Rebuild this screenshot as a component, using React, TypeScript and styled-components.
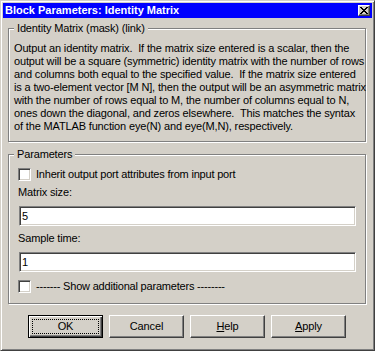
import React from "react";
import styled, { createGlobalStyle } from "styled-components";

const Global = createGlobalStyle`
  html, body {
    margin: 0;
    padding: 0;
    background: #d4d0c8;
  }
  body {
    font-family: "Liberation Sans", Arial, sans-serif;
    font-size: 11px;
    color: #000;
  }
`;

const Window = styled.div`
  box-sizing: border-box;
  width: 375px;
  height: 351px;
  background: #d4d0c8;
  border: 1px solid;
  border-color: #d4d0c8 #404040 #404040 #d4d0c8;
  box-shadow: inset 1px 1px 0 #fff, inset -1px -1px 0 #808080;
  padding: 2px;
  display: flex;
  flex-direction: column;
`;

const TitleBar = styled.div`
  height: 15px;
  background: #0000ff;
  display: flex;
  align-items: center;
  justify-content: space-between;
  padding: 0 2px 0 2px;
`;

const TitleText = styled.span`
  color: #fff;
  font-weight: bold;
  font-size: 11px;
  line-height: 15px;
  white-space: nowrap;
`;

const CloseButton = styled.div`
  box-sizing: border-box;
  width: 12px;
  height: 11px;
  background: #d4d0c8;
  border: 1px solid;
  border-color: #fff #404040 #404040 #fff;
  box-shadow: inset -1px -1px 0 #808080;
  display: flex;
  align-items: center;
  justify-content: center;
`;

const Body = styled.div`
  display: flex;
  flex-direction: column;
  padding: 10px 6px 0 5px;
`;

const Group = styled.div<{ $height: number; $top?: number }>`
  position: relative;
  box-sizing: border-box;
  height: ${(p) => p.$height}px;
  margin-top: ${(p) => p.$top ?? 0}px;
  border: 1px solid #808080;
  box-shadow: inset 1px 1px 0 #fff, 1px 1px 0 #fff;
  display: flex;
  flex-direction: column;
`;

const Legend = styled.span`
  position: absolute;
  left: 5px;
  top: -7px;
  padding: 0 3px;
  line-height: 13px;
  background: #d4d0c8;
  letter-spacing: -0.15px;
  white-space: nowrap;
`;

const Description = styled.div`
  padding: 13px 0 0 5px;
  line-height: 13px;
  letter-spacing: -0.15px;
  white-space: pre;
`;

const ParamList = styled.div`
  display: flex;
  flex-direction: column;
  padding: 13px 9px 0 9px;
`;

const CheckRow = styled.label<{ $top?: number }>`
  display: flex;
  align-items: center;
  gap: 5px;
  height: 13px;
  margin-top: ${(p) => p.$top ?? 0}px;
  line-height: 13px;
  letter-spacing: -0.2px;
  white-space: nowrap;
`;

const CheckBox = styled.span`
  box-sizing: border-box;
  flex: none;
  width: 13px;
  height: 13px;
  background: #fff;
  border: 1px solid;
  border-color: #808080 #fff #fff #808080;
  box-shadow: inset 1px 1px 0 #404040, inset -1px -1px 0 #d4d0c8;
`;

const FieldLabel = styled.div<{ $top: number }>`
  margin-top: ${(p) => p.$top}px;
  line-height: 13px;
  letter-spacing: -0.15px;
`;

const Edit = styled.input`
  box-sizing: border-box;
  display: block;
  width: 337px;
  height: 20px;
  margin: 7px 0 0 1px;
  padding: 0 2px;
  background: #fff;
  border: 1px solid;
  border-color: #808080 #fff #fff #808080;
  box-shadow: inset 1px 1px 0 #404040, inset -1px -1px 0 #d4d0c8;
  font-family: "Liberation Sans", Arial, sans-serif;
  font-size: 11px;
  color: #000;
  outline: none;
`;

const ButtonRow = styled.div`
  display: flex;
  justify-content: center;
  gap: 6px;
  margin-top: 11px;
`;

const Button = styled.div<{ $default?: boolean }>`
  box-sizing: border-box;
  position: relative;
  width: 75px;
  height: 23px;
  display: flex;
  align-items: center;
  justify-content: center;
  background: #d4d0c8;
  border: 1px solid;
  border-color: ${(p) => (p.$default ? "#000" : "#fff #404040 #404040 #fff")};
  box-shadow: ${(p) =>
    p.$default
      ? "inset 1px 1px 0 #fff, inset -1px -1px 0 #404040, inset -2px -2px 0 #808080"
      : "inset -1px -1px 0 #808080, inset 1px 1px 0 #d4d0c8"};
  letter-spacing: -0.15px;
  line-height: 13px;
  padding-bottom: 1px;
`;

const FocusRect = styled.span`
  position: absolute;
  inset: 3px 3px 3px 3px;
  border: 1px dotted #000;
`;

const description = [
  "Output an identity matrix.  If the matrix size entered is a scalar, then the",
  "output will be a square (symmetric) identity matrix with the number of rows",
  "and columns both equal to the specified value.  If the matrix size entered",
  "is a two-element vector [M N], then the output will be an asymmetric matrix",
  "with the number of rows equal to M, the number of columns equal to N,",
  "ones down the diagonal, and zeros elsewhere.  This matches the syntax",
  "of the MATLAB function eye(N) and eye(M,N), respectively.",
];

export default function App() {
  return (
    <>
      <Global />
      <Window>
        <TitleBar>
          <TitleText>Block Parameters: Identity Matrix</TitleText>
          <CloseButton>
            <svg width="8" height="7" viewBox="0 0 8 7">
              <path d="M0 0h2v1h1v1h2V1h1V0h2v1H7v1H6v1H5v1h1v1h1v1h1v1H6V6H5V5H3v1H2v1H0V6h1V5h1V4h1V3H2V2H1V1H0z" fill="#000" />
            </svg>
          </CloseButton>
        </TitleBar>
        <Body>
          <Group $height={114}>
            <Legend>Identity Matrix (mask) (link)</Legend>
            <Description>
              {description.map((line) => (
                <div key={line}>{line}</div>
              ))}
            </Description>
          </Group>
          <Group $height={150} $top={12}>
            <Legend>Parameters</Legend>
            <ParamList>
              <CheckRow>
                <CheckBox />
                <span>Inherit output port attributes from input port</span>
              </CheckRow>
              <FieldLabel $top={5}>Matrix size:</FieldLabel>
              <Edit readOnly value="5" />
              <FieldLabel $top={6}>Sample time:</FieldLabel>
              <Edit readOnly value="1" />
              <CheckRow $top={8}>
                <CheckBox />
                <span>------- Show additional parameters --------</span>
              </CheckRow>
            </ParamList>
          </Group>
          <ButtonRow>
            <Button $default>
              <FocusRect />
              OK
            </Button>
            <Button>Cancel</Button>
            <Button>
              <span>
                <u>H</u>elp
              </span>
            </Button>
            <Button>
              <span>
                <u>A</u>pply
              </span>
            </Button>
          </ButtonRow>
        </Body>
      </Window>
    </>
  );
}
